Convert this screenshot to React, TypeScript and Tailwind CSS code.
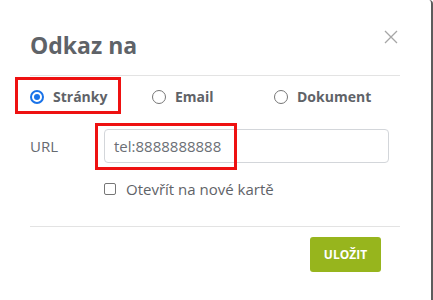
import React from "react";

function Radio({ checked }: { checked?: boolean }) {
  if (checked) {
    return (
      <span className="w-[14px] h-[14px] rounded-full border-2 border-[#1a73e8] flex items-center justify-center shrink-0">
        <span className="w-[6px] h-[6px] rounded-full bg-[#1a73e8]" />
      </span>
    );
  }
  return <span className="w-[14px] h-[14px] rounded-full border border-[#767676] shrink-0" />;
}

export default function App() {
  return (
    <div className="w-[433px] h-[300px] bg-white relative overflow-hidden font-['Open_Sans',sans-serif]">
      <div className="h-full w-full border-r-2 border-[#5c5c5c] rounded-tr-[4px] pl-[30px] pr-[31px] pt-[29px] flex flex-col">
        <div className="flex justify-between items-start">
          <h2 className="text-[23px] leading-[32px] font-bold text-[#5f6368]">Odkaz na</h2>
          <svg width="14" height="14" viewBox="0 0 14 14" className="mt-[1px] mr-[2px]">
            <path d="M1 1 L13 13 M13 1 L1 13" stroke="#a6a6a6" strokeWidth="1.3" fill="none" />
          </svg>
        </div>
        <div className="mt-[14px] h-px bg-[#e3e3e3]" />
        <div className="mt-[10px] h-[20px] grid grid-cols-[122px_122px_1fr] items-center">
          <label className="flex items-center gap-[9px] text-[14px] font-bold text-[#5f6368]">
            <Radio checked />
            <span>Stránky</span>
          </label>
          <label className="flex items-center gap-[9px] text-[14px] font-bold text-[#5f6368]">
            <Radio />
            <span>Email</span>
          </label>
          <label className="flex items-center gap-[9px] text-[14px] font-bold text-[#5f6368]">
            <Radio />
            <span>Dokument</span>
          </label>
        </div>
        <div className="mt-[23px] flex items-center">
          <span className="w-[74px] text-[15px] text-[#666a70]">URL</span>
          <div className="w-[285px] h-[34px] border border-[#d3d6da] rounded-[4px] px-[9px] flex items-center text-[15px] text-[#6b6f75]">
            tel:8888888888
          </div>
        </div>
        <div className="mt-[16px] h-[20px] ml-[74px] flex items-center gap-[10px]">
          <span className="w-[12px] h-[12px] border border-[#767676] rounded-[2px] shrink-0" />
          <span className="text-[15px] text-[#5f6368]">Otevřít na nové kartě</span>
        </div>
        <div className="mt-[27px] h-px bg-[#e3e3e3]" />
        <div className="mt-[10px] flex justify-end pr-[19px]">
          <button className="w-[71px] h-[35px] rounded-[3px] bg-[#97b51d] text-white text-[12px] font-bold">
            ULOŽIT
          </button>
        </div>
      </div>
      <div className="absolute left-[15px] top-[77px] w-[106px] h-[37px] border-[3px] border-[#ee1111]" />
      <div className="absolute left-[95px] top-[123px] w-[142px] h-[47px] border-[3px] border-[#ee1111]" />
    </div>
  );
}
